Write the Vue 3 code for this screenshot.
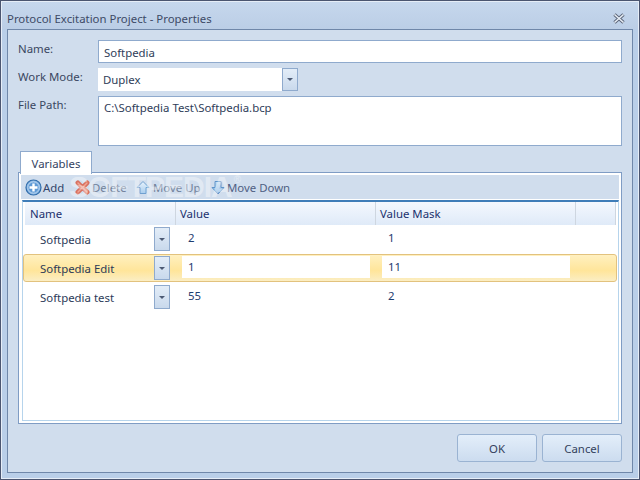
<script setup>
const rows = [
  { name: 'Softpedia', value: '2', mask: '1', active: false },
  { name: 'Softpedia Edit', value: '1', mask: '11', active: true },
  { name: 'Softpedia test', value: '55', mask: '2', active: false },
]
</script>

<template>
  <div class="window">
    <div class="inner">
      <header class="titlebar">
        <span class="title">Protocol Excitation Project - Properties</span>
        <svg class="close" width="12" height="11" viewBox="0 0 12 11">
          <path d="M1.5 1.5 L10.5 9.5 M10.5 1.5 L1.5 9.5" stroke="#5a6478" stroke-width="3.4" fill="none" />
          <path d="M1.5 1.5 L10.5 9.5 M10.5 1.5 L1.5 9.5" stroke="#e6edf5" stroke-width="1.6" fill="none" />
        </svg>
      </header>
      <main class="panel">
        <div class="form-row first">
          <label class="label">Name:</label>
          <div class="field single">Softpedia</div>
        </div>
        <div class="form-row">
          <label class="label">Work Mode:</label>
          <div class="combo">
            <div class="combo-text">Duplex</div>
            <div class="combo-btn"><i class="caret"></i></div>
          </div>
        </div>
        <div class="form-row">
          <label class="label">File Path:</label>
          <div class="field multi">C:\Softpedia Test\Softpedia.bcp</div>
        </div>

        <div class="tabs">
          <div class="tab">Variables</div>
          <div class="tab-panel">
            <div class="toolbar">
              <span class="tool add">
                <svg width="17" height="17" viewBox="0 0 17 17">
                  <circle cx="8.5" cy="8.5" r="7.5" fill="#8db8e4" stroke="#2f6cab" stroke-width="1.2" />
                  <circle cx="8.5" cy="8.5" r="5.6" fill="#5f9ad6" stroke="#c4dcf3" stroke-width=".8" />
                  <path d="M8.5 4.5v8M4.5 8.5h8" stroke="#fff" stroke-width="2.4" />
                </svg>
                <span class="tool-text dark">Add</span>
              </span>
              <span class="tool del">
                <svg width="15" height="15" viewBox="0 0 15 15">
                  <path d="M2.8 2.8 L12.2 12.2 M12.2 2.8 L2.8 12.2" stroke="#d8705f" stroke-width="4.6" stroke-linecap="round" />
                  <path d="M3 3 L12 12 M12 3 L3 12" stroke="#f0a493" stroke-width="1.5" stroke-linecap="round" />
                </svg>
                <span class="tool-text">Delete</span>
              </span>
              <span class="tool up">
                <svg width="14" height="15" viewBox="0 0 14 15">
                  <defs>
                    <linearGradient id="upFill" x1="0" y1="0" x2="0" y2="1">
                      <stop offset="0" stop-color="#e8f3fc" />
                      <stop offset="1" stop-color="#a8cdee" />
                    </linearGradient>
                  </defs>
                  <path d="M7 1.5 L13 7.5 H10 V13.5 H4 V7.5 H1 Z" fill="url(#upFill)" stroke="#6fa0d0" stroke-linejoin="round" />
                </svg>
                <span class="tool-text">Move Up</span>
              </span>
              <span class="tool down">
                <svg width="14" height="15" viewBox="0 0 14 15">
                  <defs>
                    <linearGradient id="downFill" x1="0" y1="0" x2="0" y2="1">
                      <stop offset="0" stop-color="#c6def4" />
                      <stop offset="1" stop-color="#7fb2e2" />
                    </linearGradient>
                  </defs>
                  <path d="M7 14 L13 7.5 H10 V1.5 H4 V7.5 H1 Z" fill="url(#downFill)" stroke="#5f93c8" stroke-linejoin="round" />
                </svg>
                <span class="tool-text mid">Move Down</span>
              </span>
            </div>

            <div class="grid">
              <div class="grid-head">
                <div class="hcell c1">Name</div>
                <div class="hcell c2">Value</div>
                <div class="hcell c3">Value Mask</div>
                <div class="hcell c4"></div>
              </div>
              <div v-for="row in rows" :key="row.name" class="grid-row" :class="{ active: row.active }">
                <div class="cell-name">{{ row.name }}</div>
                <div class="row-btn"><i class="caret"></i></div>
                <div class="cell-val">{{ row.value }}</div>
                <div class="cell-val mask">{{ row.mask }}</div>
              </div>
            </div>
            <div class="watermark">SOFTPEDIA<sup>®</sup></div>
          </div>
        </div>

        <footer class="actions">
          <button class="btn">OK</button>
          <button class="btn">Cancel</button>
        </footer>
      </main>
    </div>
  </div>
</template>

<style>
html, body { margin: 0; padding: 0; }
</style>

<style scoped>
* { box-sizing: border-box; }
.window {
  width: 640px;
  height: 480px;
  border: 1px solid #4b5570;
  font-family: "Noto Sans", "Open Sans", sans-serif;
  font-size: 11.4px;
  color: #33415c;
  overflow: hidden;
}
.inner {
  height: 100%;
  border: 1px solid #e6edf7;
  background: #b9cee8;
  padding: 0 5px 5px;
  display: flex;
  flex-direction: column;
}
.titlebar {
  height: 27px;
  flex: none;
  margin: 0 -5px;
  padding: 0 13px 0 5px;
  background: linear-gradient(#c6d7ed, #bbcee6);
  display: flex;
  align-items: center;
  justify-content: space-between;
}
.title { color: #3d4a66; padding-top: 7px; line-height: 16px; }
.close { margin-top: 6px; }
.panel {
  flex: 1;
  width: 626px;
  border: 1px solid #6f87a9;
  background: #d0dded;
  padding: 10px 10px 0 10px;
  display: flex;
  flex-direction: column;
}
.form-row { display: flex; margin-bottom: 5px; }
.label {
  width: 80px;
  line-height: 16px;
  color: #3a4761;
  padding-top: 1px;
}
.field {
  width: 524px;
  background: #fff;
  border: 1px solid #8faacd;
  color: #2f3d59;
  padding: 0 5px;
}
.single { height: 23px; line-height: 23px; }
.multi { height: 50px; line-height: 16px; padding-top: 3px; }
.combo { display: flex; width: 200px; height: 23px; }
.combo-text {
  flex: 1;
  background: #fff;
  padding-left: 5px;
  line-height: 23px;
  color: #2f3d59;
}
.combo-btn, .row-btn {
  width: 16px;
  flex: none;
  border: 1px solid #8faacd;
  background: linear-gradient(#e3edf8, #c9d9ec);
  display: flex;
  align-items: center;
  justify-content: center;
}
.caret {
  width: 0;
  height: 0;
  border-left: 3px solid transparent;
  border-right: 3px solid transparent;
  border-top: 3px solid #4c5a74;
}
.tabs { position: relative; }
.tab {
  position: relative;
  z-index: 1;
  margin-left: 2px;
  width: 72px;
  height: 23px;
  background: #fff;
  border: 1px solid #8faacd;
  border-bottom: 0;
  text-align: center;
  line-height: 24px;
  color: #35435f;
}
.tab-panel {
  position: relative;
  width: 604px;
  height: 252px;
  margin-top: -2px;
  border: 1px solid #7f9cc4;
  background: #fff;
  padding: 2px;
}
.toolbar {
  height: 24px;
  background: #d0dded;
  display: flex;
  align-items: center;
  padding-left: 4px;
}
.tool { display: flex; align-items: center; }
.add { width: 50px; gap: 1px; }
.del { width: 61px; gap: 2px; }
.up { width: 75px; gap: 3px; }
.down { gap: 2px; }
.tool-text { color: #6f8099; }
.tool-text.dark { color: #33456b; }
.tool-text.mid { color: #4f6083; }
.grid {
  margin: 1px 0 0 1px;
  width: 597px;
  height: 221px;
  border: 1px solid #b6d4ec;
  border-top: 2px solid #3f7db8;
  background: #fff;
}
.grid-head {
  height: 23px;
  margin-left: 2px;
  margin-right: 2px;
  background: linear-gradient(#f4f8fe, #dfeaf8);
  display: flex;
  line-height: 23px;
  color: #22316e;
}
.hcell { border-right: 1px solid #ced6e0; padding-left: 5px; flex: none; }
.c1 { width: 151px; }
.c2 { width: 200px; padding-left: 4px; }
.c3 { width: 200px; padding-left: 4px; }
.c4 { width: 40px; }
.grid-row {
  height: 29px;
  display: flex;
  align-items: flex-start;
  padding-top: 2px;
  color: #2b3a58;
}
.grid-row.active {
  height: 28px;
  margin-bottom: 1px;
  width: 594px;
  padding-top: 1px;
  border: 1px solid #e2c27e;
  border-radius: 3px;
  background: linear-gradient(#fff0c0 0%, #ffe59a 60%, #fbeec4 100%);
}
.cell-name {
  width: 131px;
  flex: none;
  height: 26px;
  line-height: 26px;
  padding-left: 17px;
}
.active .cell-name { width: 130px; padding-left: 16px; }
.row-btn { height: 24px; }
.cell-val {
  width: 188px;
  flex: none;
  height: 22px;
  line-height: 22px;
  padding-left: 6px;
  margin-left: 12px;
  color: #1f3d70;
}
.active .cell-val { background: #fff; }
.watermark {
  position: absolute;
  left: 50px;
  top: 0;
  font-family: "Liberation Sans", sans-serif;
  font-weight: 700;
  font-size: 30px;
  line-height: 28px;
  letter-spacing: -1px;
  color: rgba(255, 255, 255, .4);
  white-space: nowrap;
  pointer-events: none;
}
.watermark sup { font-size: 10px; vertical-align: 14px; line-height: 0; font-weight: 400; letter-spacing: 0; margin-left: 2px; }
.actions {
  display: flex;
  justify-content: flex-end;
  gap: 5px;
  margin-top: 10px;
}
.btn {
  width: 80px;
  height: 28px;
  border: 1px solid #9ab3d2;
  border-radius: 3px;
  background: linear-gradient(#e3eefa, #ccdcef);
  font: inherit;
  color: #33415c;
  padding: 0;
}
</style>
